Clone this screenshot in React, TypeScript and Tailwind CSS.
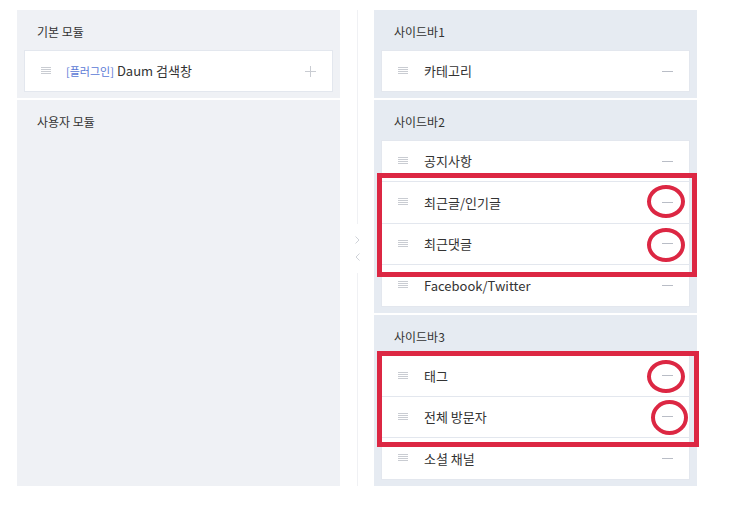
import React from "react";

type Item = { name: string };

const sidebars: { title: string; items: Item[] }[] = [
  { title: "사이드바1", items: [{ name: "카테고리" }] },
  {
    title: "사이드바2",
    items: [
      { name: "공지사항" },
      { name: "최근글/인기글" },
      { name: "최근댓글" },
      { name: "Facebook/Twitter" },
    ],
  },
  {
    title: "사이드바3",
    items: [{ name: "태그" }, { name: "전체 방문자" }, { name: "소셜 채널" }],
  },
];

const Handle = () => (
  <svg width="10" height="8" viewBox="0 0 10 8" className="shrink-0">
    <g stroke="#c9ccd2" strokeWidth="1">
      <line x1="0" y1="0.5" x2="10" y2="0.5" />
      <line x1="0" y1="2.5" x2="10" y2="2.5" />
      <line x1="0" y1="4.5" x2="10" y2="4.5" />
      <line x1="0" y1="6.5" x2="10" y2="6.5" />
    </g>
  </svg>
);

const Minus = () => <span className="block h-[1px] w-[11px] bg-[#b9bdc6]" />;

const Plus = () => (
  <svg width="11" height="11" viewBox="0 0 11 11" className="shrink-0">
    <g stroke="#c9ccd2" strokeWidth="1">
      <line x1="0" y1="5.5" x2="11" y2="5.5" />
      <line x1="5.5" y1="0" x2="5.5" y2="11" />
    </g>
  </svg>
);

const Row = ({ name }: Item) => (
  <div className="flex h-[41.5px] items-center border-t border-[#e3e7ee] pl-[16px] pr-[16px] first:h-[40px] first:border-t-0">
    <Handle />
    <span className="ml-[16px] flex-1 text-[13px] text-[#333]">{name}</span>
    <Minus />
  </div>
);

const Title = ({ text }: { text: string }) => (
  <div className="h-[40px] pl-[13px] pt-[14px] text-[12px] leading-[16px] text-[#333]">
    {text}
  </div>
);

const Circle = ({ cls }: { cls: string }) => (
  <div className={"absolute rounded-[50%] border-[4px] border-[#dc2743] " + cls} />
);

export default function App() {
  return (
    <div className="flex bg-white pl-[17px] pt-[10px] font-['Noto_Sans_CJK_KR','Noto_Sans',sans-serif]">
      {/* 왼쪽: 모듈 목록 */}
      <div className="flex h-[476px] w-[323px] flex-col">
        <div className="bg-[#eff1f5] px-[7px] pb-[6px]">
          <Title text="기본 모듈" />
          <div className="flex h-[42px] items-center border border-[#e3e7ee] bg-white pl-[16px] pr-[16px]">
            <Handle />
            <span className="ml-[15px] text-[11px] text-[#5b7ad6]">[플러그인]</span>
            <span className="ml-[3px] flex-1 text-[13px] text-[#333]">Daum 검색창</span>
            <Plus />
          </div>
        </div>
        <div className="mt-[2px] flex-1 bg-[#eff1f5] px-[7px]">
          <Title text="사용자 모듈" />
        </div>
      </div>

      {/* 가운데 구분선 */}
      <div className="flex h-[476px] w-[34px] flex-col items-center">
        <div className="w-[1px] flex-1 bg-[#f0f1f4]" />
        <div className="flex h-[49px] flex-col items-center justify-center gap-[9px]">
          <svg width="5" height="8" viewBox="0 0 5 8">
            <path d="M0.5 0.5 L4 4 L0.5 7.5" fill="none" stroke="#cfd2d8" strokeWidth="1" />
          </svg>
          <svg width="5" height="8" viewBox="0 0 5 8">
            <path d="M4.5 0.5 L1 4 L4.5 7.5" fill="none" stroke="#cfd2d8" strokeWidth="1" />
          </svg>
        </div>
        <div className="w-[1px] flex-1 bg-[#f0f1f4]" />
      </div>

      {/* 오른쪽: 사이드바 */}
      <div className="relative flex h-[476px] w-[323px] flex-col gap-[2px]">
        {sidebars.map((sb, i) => (
          <div
            key={sb.title}
            className={
              "bg-[#e6ebf2] px-[7px] " +
              (i === sidebars.length - 1 ? "min-h-0 flex-1" : "pb-[6px]")
            }
          >
            <Title text={sb.title} />
            <div className="border border-[#e3e7ee] bg-white">
              {sb.items.map((it) => (
                <Row key={it.name} name={it.name} />
              ))}
            </div>
          </div>
        ))}

        {/* 강조 표시 */}
        <div className="absolute left-[3px] top-[163px] h-[104px] w-[320px] border-[5px] border-[#dc2743]" />
        <div className="absolute left-[3px] top-[341px] h-[96px] w-[322px] border-[5px] border-[#dc2743]" />
        <Circle cls="left-[273px] top-[175px] h-[33px] w-[38px]" />
        <Circle cls="left-[273px] top-[218px] h-[34px] w-[38px]" />
        <Circle cls="left-[273px] top-[350px] h-[33px] w-[38px]" />
        <Circle cls="left-[277px] top-[390px] h-[35px] w-[37px]" />
      </div>
    </div>
  );
}
